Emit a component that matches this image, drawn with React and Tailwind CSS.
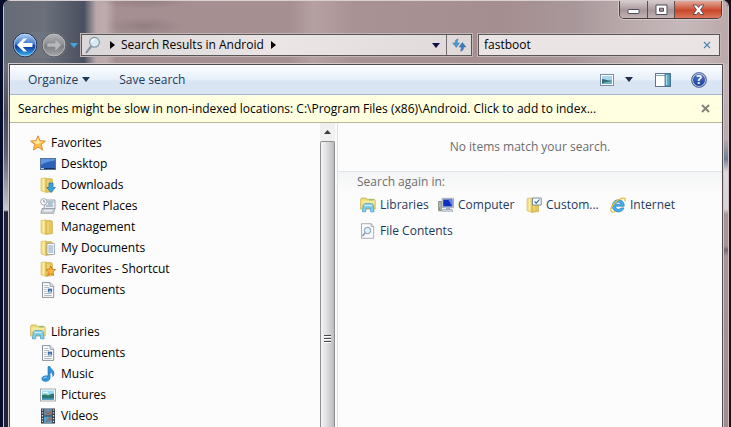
import React, { useState } from "react";

function Folder({ children }) {
  return (
    <svg width="16" height="16" viewBox="0 0 16 16" aria-hidden="true" className="shrink-0">
      <path d="M1 1.5 6 .8v14.6l-5-1.6z" fill="#f3dc82" stroke="#d8b955" strokeWidth=".6" />
      <path d="M6 1.6h5.2l1.3 1v12l-6.5.8z" fill="#e3c65c" stroke="#c9a843" strokeWidth=".6" />
      <path d="M3.5 2v11.6" stroke="#fbf0b4" strokeWidth="1.4" />
      <path d="M8 3v10.5" stroke="#f1dc86" strokeWidth="1.2" />
      {children}
    </svg>
  );
}

function StarIcon() {
  return (
    <svg width="16" height="16" viewBox="0 0 16 16" aria-hidden="true" className="shrink-0">
      <path d="m8 .8 2 4.9 5.4.4-4.2 3.5 1.5 5.5L8 12.1l-4.7 3 1.4-5.5L.6 6.1 6 5.7z" fill="#fbbd45" stroke="#dd8329" strokeWidth=".9" />
      <path d="m8 2.8 1.3 3.6 3.5.4-6 2.6-3.7-2.6 3.5-.5z" fill="#ffe9a0" />
    </svg>
  );
}

function DesktopIcon() {
  return (
    <svg width="16" height="16" viewBox="0 0 16 16" aria-hidden="true" className="shrink-0">
      <rect x=".5" y="2.5" width="15" height="11" fill="#2b62b8" stroke="#53749f" />
      <path d="M1 3h14v1.5C9 5 4 7 1 9z" fill="#5e97db" />
      <path d="M1 12.5h14" stroke="#16345f" />
      <path d="M1 12.500h3" fill="none" stroke="#9dddeb" />
    </svg>
  );
}

function DownloadsIcon() {
  return (
    <Folder>
      <path d="M9 6h4v4.5h2.4L11 15.6 6.7 10.5H9z" fill="#39a3df" stroke="#1f6da8" strokeWidth=".7" />
    </Folder>
  );
}

function RecentIcon() {
  return (
    <svg width="16" height="16" viewBox="0 0 16 16" aria-hidden="true" className="shrink-0">
      <path d="M5 2h10v9H4z" fill="#e9edf1" stroke="#8793a2" strokeWidth=".8" />
      <path d="M7.5 4h6M8 6h4.5M6 8h7" stroke="#7c93ac" />
      <path d="M2 10.5h13l-1.5 4.8H.8z" fill="#c8ced6" stroke="#8b949f" strokeWidth=".7" />
      <path d="M4 12.8h8" stroke="#fff" />
      <circle cx="3.8" cy="3.8" r="3.2" fill="#f7f9fb" stroke="#919ba8" strokeWidth=".8" />
      <path d="M3.8 2v2h1.6" fill="none" stroke="#53657a" strokeWidth=".7" />
    </svg>
  );
}

function MyDocsIcon() {
  return (
    <Folder>
      <path d="M7 3.5h7.5v11H7z" fill="#fafcff" stroke="#8597aa" strokeWidth=".7" />
      <path d="M8.3 6h5M8.3 8h5M8.3 10h5M8.3 12h5" stroke="#7391b5" strokeWidth=".9" />
    </Folder>
  );
}

function FavFolderIcon() {
  return (
    <Folder>
      <path d="m10.8 5 1.4 3.2 3.4.3-2.6 2.3.8 3.7-3-1.9-3.2 1.9.9-3.7L6 8.5l3.5-.3z" fill="#fbb53c" stroke="#cf721d" strokeWidth=".8" />
    </Folder>
  );
}

function DocIcon() {
  return (
    <svg width="16" height="16" viewBox="0 0 16 16" aria-hidden="true" className="shrink-0">
      <path d="M2.5.6H10l3.7 3.6v11.2H2.5z" fill="#fdfeff" stroke="#7d8791" strokeWidth=".9" />
      <path d="M10 .6v3.8h3.7" fill="#d7dfe8" stroke="#7d8791" strokeWidth=".7" />
      <path d="M4.2 3.5h4M4.2 5.5h5M4.2 7.5h2.5M4.2 9.5h2.5M4.2 11.5h7.5M4.2 13.5h7.5" stroke="#9aa5b1" strokeWidth=".8" />
      <path d="M7.8 6.6h4.3v3.8H7.8z" fill="#3d6ea8" />
      <path d="M8.4 9.8 10 8.3l1.6 1.5z" fill="#bfe0f4" />
    </svg>
  );
}

function LibraryIcon() {
  return (
    <svg width="16" height="16" viewBox="0 0 16 16" aria-hidden="true" className="shrink-0">
      <path d="M.6 2.4 1.4 1H6l1 1.3h7.2l1 1.2v8.6H.6z" fill="#eedc76" stroke="#c5ab4c" strokeWidth=".7" />
      <path d="M1.2 4.2h13.4M1.2 6h13.4" stroke="#fbf4b8" strokeWidth=".9" />
      <path d="M9.2 2.9h4.4" stroke="#65b783" strokeWidth="1" />
      <path d="M2.4 14.8 3.3 8l1.7-1.4h6.6L13.2 8l.9 6.8h-3.4l-.5-3.6H6.1l-.5 3.6z" fill="#83cdec" stroke="#4e9fc5" strokeWidth=".8" />
      <path d="M4.2 8.4h8" stroke="#d5f3fd" />
    </svg>
  );
}

function MusicIcon() {
  return (
    <svg width="16" height="16" viewBox="0 0 16 16" aria-hidden="true" className="shrink-0">
      <path d="M8 .5h2c.3 2.4 3.8 3.3 4 6.4.1 1.7-.6 2.9-1.2 3.6.3-2.3-.7-3.7-2.7-4.3v5.6c0 2-1.9 3.6-4.4 3.6-2.2 0-3.900-1-3.900-2.600 0-1.800 2-3 4.300-3 .7 0 1.400.1 1.900.3z" fill="#2f94dc" stroke="#1c70b3" strokeWidth=".6" />
      <path d="M3.3 12.3c.6-.9 2.2-1.3 3.5-1" fill="none" stroke="#9fdcfb" />
    </svg>
  );
}

function PictureIcon() {
  return (
    <svg width="16" height="16" viewBox="0 0 16 16" aria-hidden="true" className="shrink-0">
      <rect x=".5" y="2" width="15" height="12" fill="#fff" stroke="#8b969e" strokeWidth=".8" />
      <path d="M2 3.5h12v9H2z" fill="#98d7f2" />
      <path d="M2 8c3-1.6 5 .8 7 0s3-1.5 5-1v5.500H2z" fill="#2e7769" />
      <path d="M2 10.800h12v1.700H2z" fill="#378cba" />
      <path d="M3 5.500h5" stroke="#e8faff" strokeWidth="1.400" />
    </svg>
  );
}

function VideoIcon() {
  return (
    <svg width="16" height="16" viewBox="0 0 16 16" aria-hidden="true" className="shrink-0">
      <path d="M1 .5h14v15H1z" fill="#363b43" />
      <path d="M4 1h8v6.500H4z" fill="#5590bc" />
      <path d="M4 8.500h8V15H4z" fill="#4fa1cf" />
      <path d="m4 1 4 3 3-2 1 5H6zM5 15l2-4 3-2 2 1v2z" fill="#9d6650" opacity=".75" />
      <path d="M2.500 1.500v14M13.500 1.500v14" stroke="#dfe7ec" strokeWidth="1.300" strokeDasharray="1.300 1.500" />
    </svg>
  );
}

function ComputerIcon() {
  return (
    <svg width="16" height="16" viewBox="0 0 16 16" aria-hidden="true" className="shrink-0">
      <path d="M.7 4.500h2.600v9.300H.7z" fill="#b5bfba" stroke="#697567" strokeWidth=".8" />
      <path d="M1.500 10.500v2" stroke="#65a63f" />
      <path d="M4 1.300h11.500v9.400H4z" fill="#d6dce8" stroke="#8993a7" strokeWidth=".7" />
      <path d="M5.200 2.500h9.100v7H5.200z" fill="#0f2fba" />
      <path d="M10 2.500h4.300v7z" fill="#637fe2" />
      <path d="M8 10.700h4v2H8z" fill="#a5adb8" />
      <path d="M5 12.500h9l1 1.800H4z" fill="#d9dee5" stroke="#8a93a0" strokeWidth=".6" />
    </svg>
  );
}

function CustomIcon() {
  return (
    <Folder>
      <path d="M6.500 1h8.700v7H6.500z" fill="#f6fbff" stroke="#708191" strokeWidth=".9" />
      <path d="m8.500 4.300 1.700 1.800 3.300-3.600" fill="none" stroke="#365f9e" strokeWidth="1.100" />
    </Folder>
  );
}

function InternetIcon() {
  return (
    <svg width="16" height="16" viewBox="0 0 16 16" aria-hidden="true" className="shrink-0">
      <path d="M14.200 9.300H5.600c.2 2 1.400 2.900 2.900 2.900 1.200 0 2-.5 2.400-1.300h3.100c-.7 2.300-2.900 4-5.600 4-3.500 0-6.100-2.600-6.100-6s2.600-6.100 6.100-6.100c3.700 0 6.100 2.600 5.800 6.500zM11 7.200C10.700 5.900 9.700 5.200 8.400 5.200c-1.400 0-2.400.8-2.700 2z" fill="#45aee8" stroke="#2279bb" strokeWidth=".6" />
      <path d="M1.700 14.900C-.5 13.100 2 8 6 4.800 9.800 1.600 14 .2 15 1.700c.5.800.2 1.800-.3 2.700" fill="none" stroke="#edbd3a" strokeWidth="1.300" />
      <path d="M1.700 14.900c.9.500 2.300 0 3.600-.7" fill="none" stroke="#edbd3a" strokeWidth="1.200" />
    </svg>
  );
}

function ContentsIcon() {
  return (
    <svg width="16" height="16" viewBox="0 0 16 16" aria-hidden="true" className="shrink-0">
      <path d="M1.500.7h9.500l2.700 2.600v12H1.500z" fill="#f9fbfc" stroke="#929ba4" strokeWidth=".8" />
      <path d="M11 .7v2.800h2.700" fill="none" stroke="#929ba4" strokeWidth=".7" />
      <circle cx="7.500" cy="7.500" r="3.200" fill="#dff1fa" stroke="#8195aa" />
      <path d="m5 10-2.500 3" stroke="#8195aa" strokeWidth="1.400" />
    </svg>
  );
}

function SearchGlass() {
  return (
    <svg width="16" height="18" viewBox="0 0 16 18" aria-hidden="true" className="shrink-0">
      <path d="m6 10.500-4.500 5.800" stroke="#8793a0" strokeWidth="2.200" strokeLinecap="round" />
      <circle cx="9.500" cy="6.300" r="4.900" fill="#d5eaf5" stroke="#8997a6" strokeWidth="1.200" />
      <path d="M6.500 6c.2-1.800 1.600-2.800 3.200-2.800" fill="none" stroke="#fff" strokeWidth="1.400" />
    </svg>
  );
}

function NavArrow({ forward }) {
  return (
    <svg width="26" height="26" viewBox="0 0 26 26" aria-hidden="true">
      <defs>
        <linearGradient id={forward ? "fwd" : "back"} x1="0" x2="0" y1="0" y2="1">
          <stop offset="0" stopColor={forward ? "#b3b5b8" : "#b4d2f2"} />
          <stop offset=".46" stopColor={forward ? "#8f9195" : "#3f7dd0"} />
          <stop offset=".54" stopColor={forward ? "#7b7d82" : "#08349a"} />
          <stop offset="1" stopColor={forward ? "#a6a8ab" : "#3dbdf8"} />
        </linearGradient>
      </defs>
      <circle cx="13" cy="13" r="11.800" fill={forward ? "url(#fwd)" : "url(#back)"} stroke={forward ? "#55595f" : "#1c2a4c"} strokeWidth="1" />
      <circle cx="13" cy="13" r="10.900" fill="none" stroke={forward ? "#c0c2c4" : "#bcd6f1"} strokeWidth=".8" />
      <path
        d={forward ? "M20.500 13l-6.500-6.500V11H6v4h8v4.500z" : "M5 13l6.500-6.500h3.500L10.800 11H20.500v4h-9.700l4.200 4.500h-3.500z"}
        fill={forward ? "#b7b9bb" : "#fff"}
        stroke={forward ? "#85878b" : "none"}
        strokeWidth=".7"
      />
    </svg>
  );
}

function Caret({ color }) {
  return (
    <svg width="8" height="5" viewBox="0 0 8 5" aria-hidden="true" className="shrink-0">
      <path d="M0 0h8L4 5z" fill={color} />
    </svg>
  );
}

function Chevron() {
  return (
    <svg width="5" height="8" viewBox="0 0 5 8" aria-hidden="true" className="shrink-0">
      <path d="M0 0v8l5-4z" fill="#000" />
    </svg>
  );
}

const groups = [
  {
    name: "Favorites",
    Icon: StarIcon,
    items: [
      ["Desktop", DesktopIcon],
      ["Downloads", DownloadsIcon],
      ["Recent Places", RecentIcon],
      ["Management", Folder],
      ["My Documents", MyDocsIcon],
      ["Favorites - Shortcut", FavFolderIcon],
      ["Documents", DocIcon],
    ],
  },
  {
    name: "Libraries",
    Icon: LibraryIcon,
    items: [
      ["Documents", DocIcon],
      ["Music", MusicIcon],
      ["Pictures", PictureIcon],
      ["Videos", VideoIcon],
    ],
  },
];

const places = [
  ["Libraries", LibraryIcon],
  ["Computer", ComputerIcon],
  ["Custom...", CustomIcon],
  ["Internet", InternetIcon],
  ["File Contents", ContentsIcon],
];

function CaptionButtons() {
  return (
    <div className="mr-1.5 flex h-[18px] self-end overflow-hidden rounded-b-[5px] border border-t-0 border-[#4b3d40] shadow-[0_0_0_1px_#d5c8c9]">
      <button aria-label="Minimize" className="flex w-7 items-center justify-center border-r border-[#5d4d50] bg-linear-to-b from-[#d6cccd] via-[#a79699] via-55% to-[#c2b3b5]">
        <svg width="13" height="13" viewBox="0 0 13 13" aria-hidden="true">
          <rect x="1" y="6.500" width="11" height="4" rx=".5" fill="#fff" stroke="#4b4c57" />
        </svg>
      </button>
      <button aria-label="Maximize" className="flex w-[27px] items-center justify-center border-r border-[#5d4d50] bg-linear-to-b from-[#d6cccd] via-[#a79699] via-55% to-[#c2b3b5]">
        <svg width="13" height="13" viewBox="0 0 13 13" aria-hidden="true">
          <path d="M1 2h11v9.500H1zM4.500 5.200v3h4v-3z" fill="#fff" fillRule="evenodd" stroke="#4b4c57" />
        </svg>
      </button>
      <button aria-label="Close" className="flex w-[46px] items-center justify-center bg-linear-to-b from-[#e3a898] from-0% via-[#c8452a] via-55% to-[#dc775b]">
        <svg width="13" height="13" viewBox="0 0 13 13" aria-hidden="true">
          <path d="M1 2h3.600l1.900 2.400L8.400 2H12L8.500 6.700l3.500 4.800H8.400L6.500 9l-1.900 2.500H1l3.500-4.800z" fill="#fff" stroke="#4e4555" strokeWidth=".9" />
        </svg>
      </button>
    </div>
  );
}

function AddressRow() {
  const [query, setQuery] = useState("fastboot");
  return (
    <div className="mt-[13px] flex h-[26px] items-center pl-2 pr-2">
      <div className="flex h-[26px] items-center gap-[3px] rounded-full bg-[#777b8266]">
        <button aria-label="Back" className="size-[26px]"><NavArrow /></button>
        <button aria-label="Forward" className="size-[26px]"><NavArrow forward /></button>
      </div>
      <button aria-label="Recent pages" className="flex w-[13px] justify-center"><Caret color="#3ea5df" /></button>
      <div className="ml-px flex h-[22px] min-w-0 flex-1 items-center border border-[#5b5558] bg-linear-to-r from-[#dad7d8] via-[#ebe5e5] to-[#e0d9da] pl-[3px] shadow-[0_0_0_1px_#c3b7b8]">
        <SearchGlass />
        <span className="ml-[3px] flex w-[17px] justify-center"><Chevron /></span>
        <span className="truncate">Search Results in Android</span>
        <span className="ml-[7px] flex-1"><Chevron /></span>
        <button aria-label="Previous locations" className="flex w-5 justify-center"><Caret color="#10104a" /></button>
        <button aria-label="Refresh" className="flex h-full w-[25px] items-center justify-center border-l border-[#716b6e]">
          <svg width="15" height="14" viewBox="0 0 15 14" aria-hidden="true">
            <path d="M6 1C3.800 1.300 3.200 2.500 3.200 5H.7l3.600 4.400L7.500 5H5.300c0-1.700 0-2.600.7-4z" fill="#4a9bd1" stroke="#3674a8" strokeWidth=".5" />
            <path d="M8.500 13c2.300-.2 3-1.500 3-4h2.400l-3.500-4.400L7.200 9h2.200c0 1.700-.1 2.600-.9 4z" fill="#387cc0" stroke="#2c5f98" strokeWidth=".5" />
          </svg>
        </button>
      </div>
      <div className="ml-1.5 flex h-[22px] w-[242px] items-center border border-[#5b5558] bg-[#eae4e4] pl-[5px] pr-2 shadow-[0_0_0_1px_#c3b7b8]">
        <input aria-label="Search" value={query} onChange={(e) => setQuery(e.target.value)} className="min-w-0 flex-1 bg-transparent outline-none" />
        <button aria-label="Clear search" onClick={() => setQuery("")}>
          <svg width="8" height="8" viewBox="0 0 8 8" aria-hidden="true">
            <path d="m1 1 6 6M7 1 1 7" stroke="#4f86b5" strokeWidth="1.200" />
          </svg>
        </button>
      </div>
    </div>
  );
}

function Toolbar() {
  return (
    <div className="flex h-[30px] shrink-0 items-center border-b border-[#a9b6cc] bg-linear-to-b from-[#fbfdff] from-0% via-[#e7f0fa] via-50% to-[#dae5f4] to-55% pl-[18px] pr-[15px] text-[#1e395b]">
      <button className="flex items-center gap-1">Organize <Caret color="#1e395b" /></button>
      <button className="ml-[29px]">Save search</button>
      <div className="ml-auto flex items-center">
        <button aria-label="Change view">
          <svg width="14" height="14" viewBox="0 0 14 14" aria-hidden="true">
            <rect x=".5" y="1.500" width="13" height="11" fill="#fff" stroke="#7e8fa2" />
            <path d="M2 3h10v8H2z" fill="#a6d7ee" />
            <path d="M2 6c3 0 5 2 10 1.500V11H2z" fill="#2c6f78" />
            <path d="M4 9.500 12 8v3H2z" fill="#69b4c2" />
          </svg>
        </button>
        <button aria-label="More view options" className="ml-[11px]"><Caret color="#1e2f4b" /></button>
        <button aria-label="Show the preview pane" className="ml-[22px]">
          <svg width="16" height="14" viewBox="0 0 16 14" aria-hidden="true">
            <rect x=".5" y=".5" width="15" height="13" fill="#fff" stroke="#5c7593" />
            <path d="M1 2.500h14" stroke="#8ca5be" />
            <path d="M10 1h5v12h-5z" fill="#5aaccd" stroke="#39749b" strokeWidth=".8" />
            <path d="M11.500 2v10" stroke="#a9e1ee" />
          </svg>
        </button>
        <button aria-label="Get help" className="ml-5 flex size-4 items-center justify-center rounded-full border border-[#6475a0] bg-linear-to-b from-[#5577c8] to-[#173a9c] text-[12px] font-bold leading-none text-white shadow-[inset_0_0_0_1px_#b6c3df]">
          ?
        </button>
      </div>
    </div>
  );
}

function Sidebar() {
  return (
    <nav className="flex w-[325px] shrink-0">
      <div className="flex min-w-0 flex-1 flex-col gap-[21px] overflow-hidden pt-[9px]">
        {groups.map(({ name, Icon, items }) => (
          <section key={name}>
            <a href="#" className="flex h-[21px] items-center gap-[5px] pl-5"><Icon />{name}</a>
            {items.map(([label, ItemIcon]) => (
              <a href="#" key={label} className="flex h-[21px] items-center gap-[5px] pl-[30px]"><ItemIcon />{label}</a>
            ))}
          </section>
        ))}
      </div>
      <div className="flex w-[15px] shrink-0 flex-col bg-[#f0f0f0]">
        <button aria-label="Scroll up" className="flex h-[18px] items-center justify-center">
          <svg width="7" height="4" viewBox="0 0 7 4" aria-hidden="true"><path d="M0 4h7L3.500 0z" fill="#3b3b3b" /></svg>
        </button>
        <div className="flex-1 rounded-t-[2px] border border-b-0 border-[#8e8f92] bg-linear-to-r from-[#f4f4f4] via-[#dcdcde] to-[#bcbcc0] pt-[193px]">
          <div className="mx-auto flex w-[7px] flex-col gap-px">
            <span className="h-0.5 border-b border-white bg-[#45474b]" />
            <span className="h-0.5 border-b border-white bg-[#45474b]" />
            <span className="h-0.5 border-b border-white bg-[#45474b]" />
          </div>
        </div>
      </div>
    </nav>
  );
}

function Results() {
  return (
    <main className="ml-0.5 min-w-0 flex-1 border-l border-[#d3e2ef]">
      <p className="flex h-[49px] items-center justify-center border-b border-[#e2e6e9] text-[#6d6d6d]">No items match your search.</p>
      <section className="bg-linear-to-b from-[#f3f4f5] to-[#fcfcfc] to-[20px] pl-[19px]">
        <h2 className="h-5 leading-5 text-[#6d6d6d]">Search again in:</h2>
        <div className="grid grid-cols-[78px_88px_84px_auto] pl-[3px] text-[#1e395b]">
          {places.map(([label, Icon]) => (
            <a href="#" key={label} className="flex h-[26px] items-center gap-1 whitespace-nowrap"><Icon />{label}</a>
          ))}
        </div>
      </section>
    </main>
  );
}

export default function App() {
  return (
    <div className="flex h-screen w-full overflow-hidden bg-linear-to-r from-[#050d2b] from-50% to-[#15121a] to-50% pl-[3px] pr-0.5 font-['Open_Sans','Noto_Sans',sans-serif] text-[12px] leading-4 text-black">
      <div className="flex min-w-0 flex-1 flex-col overflow-hidden rounded-t-[7px] border-x border-[#cbc5c9]">
        <header className="flex h-16 shrink-0 flex-col border-t border-[#d9cfd1] bg-[radial-gradient(ellipse_40px_9px_at_140px_25px,#83707488,transparent),radial-gradient(ellipse_45px_8px_at_140px_0px,#83707488,transparent),linear-gradient(90deg,#666c76_0px,#6b707b_40px,#4a5060_80px,#b9a7aa_92px,#bdabad_102px,#a58f92_112px,#a68f91_285px,#b5a0a2_310px,#a99294_350px,#a58e90_500px,#a8979a_570px,#b9a9ab_620px,#c6b9bb_680px,#bcaaac_720px)]">
          <CaptionButtons />
          <AddressRow />
        </header>
        <div className="flex min-h-0 flex-1 bg-[linear-gradient(#6b707b,#454b5a_50px,#5c6270_90px,#c5c8cf_146px,#1d2338_148px),linear-gradient(#c3b3b5,#bcaaac_75px,#717d92_95px,#e2d8d9_108px,#ddd2d3_145px,#a89396_150px,#a89396_182px,#77656b_186px,#a89396_192px,#a08b8e)] bg-[size:8px_100%,100%_100%] bg-no-repeat px-[5px]">
          <div className="flex min-w-0 flex-1 flex-col border-x border-t border-[#514b51] bg-[#fcfcfc] shadow-[0_0_0_1px_#d0c8cb]">
            <Toolbar />
            <div className="flex h-7 shrink-0 items-center justify-between border-b border-[#b7b798] bg-[#ffffe1] pl-2 pr-3">
              <button className="truncate text-left">Searches might be slow in non-indexed locations: C:\Program Files (x86)\Android. Click to add to index...</button>
              <button aria-label="Dismiss" className="shrink-0">
                <svg width="9" height="9" viewBox="0 0 9 9" aria-hidden="true"><path d="m1 1 7 7M8 1 1 8" stroke="#858579" strokeWidth="2" /></svg>
              </button>
            </div>
            <div className="flex min-h-0 flex-1">
              <Sidebar />
              <Results />
            </div>
          </div>
        </div>
      </div>
    </div>
  );
}
